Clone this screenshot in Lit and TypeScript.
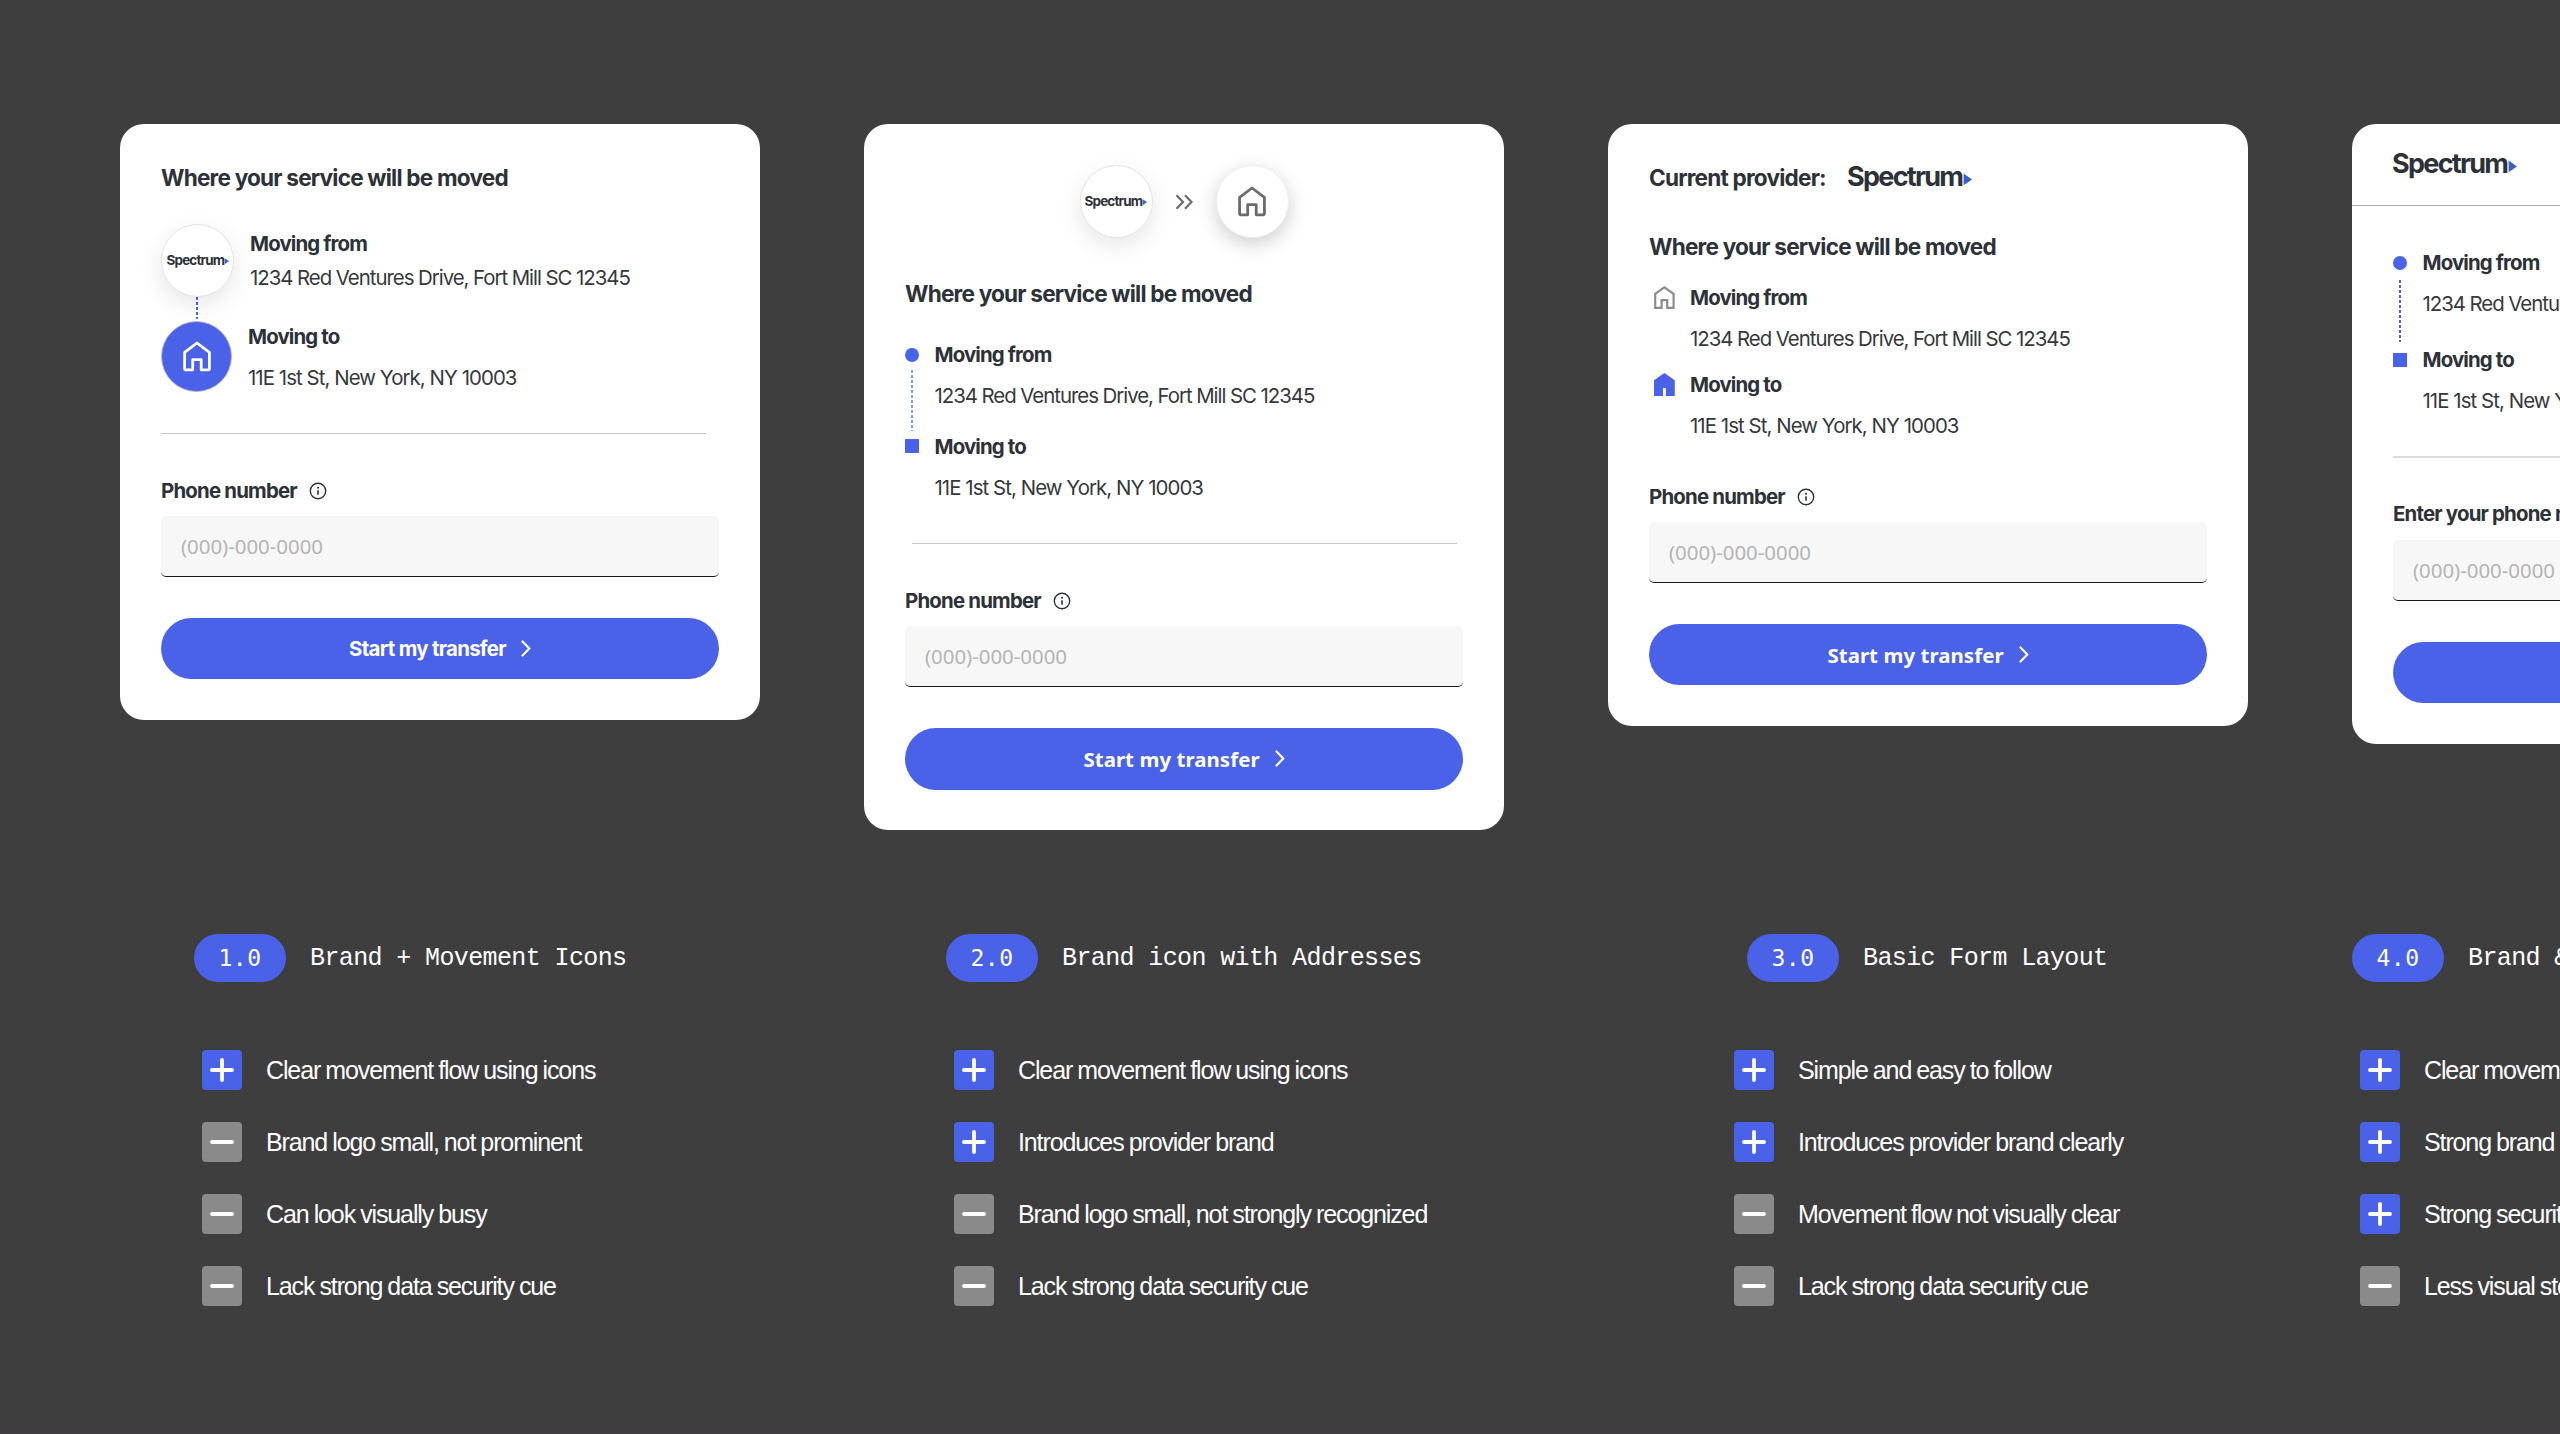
import { LitElement, html, css, svg } from 'lit';
import { customElement, property } from 'lit/decorators.js';
import { classMap } from 'lit/directives/class-map.js';

interface Note {
  good: boolean;
  text: string;
}

interface Variant {
  id: string;
  title: string;
  notes: Note[];
}

const FROM = '1234 Red Ventures Drive, Fort Mill SC 12345';
const TO = '11E 1st St, New York, NY 10003';

const variants: Variant[] = [
  {
    id: '1.0',
    title: 'Brand + Movement Icons',
    notes: [
      { good: true, text: 'Clear movement flow using icons' },
      { good: false, text: 'Brand logo small, not prominent' },
      { good: false, text: 'Can look visually busy' },
      { good: false, text: 'Lack strong data security cue' },
    ],
  },
  {
    id: '2.0',
    title: 'Brand icon with Addresses',
    notes: [
      { good: true, text: 'Clear movement flow using icons' },
      { good: true, text: 'Introduces provider brand' },
      { good: false, text: 'Brand logo small, not strongly recognized' },
      { good: false, text: 'Lack strong data security cue' },
    ],
  },
  {
    id: '3.0',
    title: 'Basic Form Layout',
    notes: [
      { good: true, text: 'Simple and easy to follow' },
      { good: true, text: 'Introduces provider brand clearly' },
      { good: false, text: 'Movement flow not visually clear' },
      { good: false, text: 'Lack strong data security cue' },
    ],
  },
  {
    id: '4.0',
    title: 'Brand & Security',
    notes: [
      { good: true, text: 'Clear movement flow' },
      { good: true, text: 'Strong brand presence' },
      { good: true, text: 'Strong security cue' },
      { good: false, text: 'Less visual storytelling' },
    ],
  },
];

const houseRound = html`
  <svg width="28" height="31" viewBox="0 0 28 31" fill="none">
    <path
      d="M2.9 28.8 H9.7 V18.6 H18.2 V28.8 H25.1 Q26.4 28.8 26.4 27.5 V11.4 L14 2 L1.6 11.4 V27.5 Q1.6 28.8 2.9 28.8 Z"
      stroke="currentColor"
      stroke-width="2.8"
      stroke-linejoin="round"
    />
  </svg>
`;

const houseOutline = html`
  <svg width="21" height="23" viewBox="0 0 21 23" fill="none">
    <path
      d="M1.2 21.8 H7.6 V14.2 H13.2 V21.8 H19.6 V7.8 L10.4 1.4 L1.2 7.8 Z"
      stroke="#8c8c8c"
      stroke-width="2.2"
    />
  </svg>
`;

const houseSolid = html`
  <svg width="21" height="23" viewBox="0 0 21 23">
    <path
      d="M0 23 V7.2 L10.4 0 L20.8 7.2 V23 H11.8 V15 H9 V23 Z"
      fill="#4a62e8"
    />
  </svg>
`;

@customElement('brand-logo')
export class BrandLogo extends LitElement {
  @property({ type: Number }) width = 124;

  static styles = css`
    :host {
      display: block;
    }
    svg {
      display: block;
      overflow: visible;
    }
    text {
      font-family: Inter, 'Liberation Sans', sans-serif;
      font-weight: 650;
      font-size: 27px;
      fill: #2d3138;
    }
  `;

  render() {
    return html`
      <svg width="${this.width}" height="${this.width / 4}" viewBox="0 0 124 31">
        ${svg`
          <text x="-1" y="23" textLength="117" lengthAdjust="spacing">Spectrum</text>
          <path d="M115.6 10.6 L124 16.4 L115.6 22.2 Z" fill="#3d5fc4" />
        `}
      </svg>
    `;
  }
}

@customElement('phone-form')
export class PhoneForm extends LitElement {
  @property({ type: String }) label = 'Phone number';

  @property({ type: Boolean }) alt = false;

  static styles = css`
    :host {
      display: block;
    }
    .label {
      display: flex;
      align-items: center;
      gap: 12.5px;
      height: 24px;
      margin-bottom: 13.4px;
      font-weight: 650;
      letter-spacing: -0.8px;
    }
    .field {
      display: flex;
      align-items: center;
      box-sizing: border-box;
      height: 61px;
      padding: 0 20px;
      border-radius: 5px;
      border-bottom: 1px solid #15181c;
      background: #f7f7f7;
      color: #b4b4b4;
      font-family: 'Noto Sans', sans-serif;
      font-size: 20.4px;
    }
    .button {
      display: flex;
      align-items: center;
      justify-content: center;
      gap: 15px;
      height: 61.4px;
      margin-top: 41px;
      border-radius: 31px;
      background: #4a62e8;
      color: white;
      font-weight: 650;
      letter-spacing: -0.7px;
    }
    .alt {
      font-family: 'Noto Sans', sans-serif;
      font-weight: 700;
      letter-spacing: 0.08px;
    }
  `;

  render() {
    return html`
      <div class="label">
        <span>${this.label}</span>
        <svg width="18" height="18" viewBox="0 0 18 18" fill="none">
          <circle cx="9" cy="9" r="7.7" stroke="#2d3138" stroke-width="1.4" />
          <path d="M9 8.2 V12.8" stroke="#2d3138" stroke-width="1.6" />
          <circle cx="9" cy="5.7" r="1" fill="#2d3138" />
        </svg>
      </div>
      <div class="field">(000)-000-0000</div>
      <div class=${classMap({ button: true, alt: this.alt })}>
        <span>Start my transfer</span>
        <svg width="10" height="17" viewBox="0 0 10 17" fill="none">
          <path
            d="M1.5 1.5 L8.3 8.5 L1.5 15.5"
            stroke="white"
            stroke-width="2.2"
            stroke-linecap="round"
            stroke-linejoin="round"
          />
        </svg>
      </div>
    `;
  }
}

@customElement('variant-notes')
export class VariantNotes extends LitElement {
  @property({ attribute: false }) variant!: Variant;

  static styles = css`
    :host {
      display: block;
      color: white;
      white-space: nowrap;
    }
    .header {
      display: flex;
      align-items: center;
      gap: 24px;
      height: 48px;
      padding-left: var(--head-inset, 0);
    }
    .title {
      padding-top: 2px;
      font-family: 'Liberation Mono', monospace;
      font-size: 25px;
      letter-spacing: -0.62px;
    }
    .badge {
      display: flex;
      align-items: center;
      justify-content: center;
      width: 92px;
      height: 48px;
      border-radius: 24px;
      background: #4a62e8;
      font-family: 'DejaVu Sans Mono', monospace;
      font-size: 23px;
      letter-spacing: 0.5px;
    }
    ul {
      display: flex;
      flex-direction: column;
      gap: 32px;
      margin: 68px 0 0;
      padding: 0 0 0 var(--list-inset, 0);
      list-style: none;
    }
    li {
      display: flex;
      align-items: center;
      gap: 24px;
      height: 40px;
      font-family: 'Liberation Sans', sans-serif;
      font-size: 25px;
      letter-spacing: -1.12px;
      word-spacing: -0.7px;
    }
    .mark {
      display: flex;
      align-items: center;
      justify-content: center;
      width: 40px;
      height: 40px;
      border-radius: 4px;
      background: #8a8a8a;
    }
    .good {
      background: #4a62e8;
    }
  `;

  render() {
    return html`
      <div class="header">
        <span class="badge">${this.variant.id}</span>
        <span class="title">${this.variant.title}</span>
      </div>
      <ul>
        ${this.variant.notes.map(
          note => html`
            <li>
              <span class=${classMap({ mark: true, good: note.good })}>
                <svg width="24" height="24" viewBox="0 0 24 24">
                  <path
                    d=${note.good ? 'M2 12 H22 M12 2 V22' : 'M2 12 H22'}
                    stroke="white"
                    stroke-width="3.8"
                    stroke-linecap="round"
                  />
                </svg>
              </span>
              <span>${note.text}</span>
            </li>
          `
        )}
      </ul>
    `;
  }
}

@customElement('app-root')
export class AppRoot extends LitElement {
  static styles = css`
    :host {
      display: block;
      box-sizing: border-box;
      width: 2560px;
      height: 1434px;
      overflow: hidden;
      padding: 124px 0 0 120px;
      border-bottom: 1px solid #443c40;
      background: #3e3e3e;
      font-family: Inter, 'Liberation Sans', sans-serif;
      font-size: 20.4px;
      line-height: 24px;
      color: #2d3138;
    }
    .board {
      display: grid;
      grid-template-columns: repeat(4, 640px);
      grid-template-rows: 810px auto;
      column-gap: 104px;
      align-items: start;
    }
    .card {
      box-sizing: border-box;
      padding: 40px 41px 40.6px;
      border-radius: 24px;
      background: white;
      white-space: nowrap;
    }
    h2 {
      margin: 0;
      height: 28px;
      font-size: 22.6px;
      font-weight: 650;
      line-height: 28px;
      letter-spacing: -0.8px;
    }
    .name {
      font-weight: 650;
      letter-spacing: -0.85px;
    }
    .address {
      color: #35383c;
      letter-spacing: -1px;
      word-spacing: -0.2px;
    }
    .name:nth-of-type(n + 3) + .address,
    .step.to .address {
      letter-spacing: -0.93px;
      word-spacing: 0;
    }
    .rule {
      width: 545px;
      height: 1.4px;
      margin-bottom: 44.6px;
      background: #c6c6c6;
    }
    .circle {
      display: flex;
      align-items: center;
      justify-content: center;
      box-sizing: border-box;
      flex: none;
      width: 73px;
      height: 73px;
      border: 1px solid #e4e4e4;
      border-radius: 50%;
      background: white;
      box-shadow: 0 8px 24px rgba(0, 0, 0, 0.1);
    }
    .raised {
      border-color: #f0f0f0;
      color: #6b6b6b;
      box-shadow: 0 6px 20px rgba(0, 0, 0, 0.2);
    }
    .filled {
      width: 71px;
      height: 71px;
      border-color: #b9b9c8;
      background: #4a62e8;
      color: white;
      box-shadow: none;
    }
    .stem {
      width: 1.5px;
      background: repeating-linear-gradient(
        #4a62e8 0 3px,
        transparent 3px 5px
      );
    }

    /* 1.0 */
    .step {
      display: flex;
      gap: 16px;
    }
    .step.from {
      margin-top: 32px;
    }
    .step.from .text {
      padding-top: 8.3px;
    }
    .step.from .address {
      margin-top: 9.3px;
    }
    .step.to .text {
      padding-top: 4.4px;
    }
    .step.to .address {
      margin-top: 17px;
    }
    .step-stem {
      height: 21.7px;
      margin: 0 0 2px 35px;
    }
    .one .rule {
      margin-top: 41px;
    }

    /* 2.0 */
    .movement {
      display: flex;
      align-items: center;
      justify-content: center;
      gap: 22.5px;
      height: 73px;
      margin: 1px 0 42px;
    }
    .track {
      display: grid;
      grid-template-columns: 14px auto;
      column-gap: 15.5px;
      margin-top: 34.8px;
    }
    .line {
      display: flex;
      flex-direction: column;
      align-items: center;
      gap: 8px;
      padding-top: 5px;
    }
    .line .stem {
      height: 61.7px;
    }
    .two .line .stem {
      opacity: 0.65;
    }
    .dot,
    .square {
      width: 14px;
      height: 14px;
      background: #4a62e8;
    }
    .dot {
      border-radius: 50%;
    }
    .places .address {
      margin-top: 17px;
    }
    .places .name + .address + .name {
      margin-top: 26.8px;
    }
    .two .rule {
      margin: 43.5px 0 44.4px 6.5px;
    }

    /* 3.0 */
    .provider {
      display: flex;
      gap: 22px;
      height: 28px;
      margin-bottom: 41px;
    }
    .provider brand-logo {
      margin-top: -1px;
    }
    .homes {
      display: grid;
      grid-template-columns: 36px auto;
      padding: 24.5px 0 46.6px 5px;
    }
    .homes .name {
      grid-column: 2;
    }
    .homes .address {
      grid-column: 2;
      margin: 17.2px 0 22.2px;
    }
    .homes .address.last {
      margin-bottom: 0;
    }
    .homes svg {
      grid-column: 1;
      margin-top: 0.5px;
    }

    /* 4.0 */
    .four {
      padding-top: 0;
    }
    .brand-bar {
      box-sizing: border-box;
      height: 82px;
      margin: 0 -41px;
      padding: 25.5px 41px 0;
      border-bottom: 1.4px solid #a9a9a9;
    }
    .four .track {
      margin-top: 44.6px;
    }
    .four .line {
      gap: 10.5px;
    }
    .four .stem {
      height: 62px;
    }
    .four .places .name + .address + .name {
      margin-top: 32px;
    }
    .four .rule {
      width: 558px;
      margin-top: 43.6px;
      background: #dcdcdc;
    }

    .notes-1 {
      --head-inset: 74px;
      --list-inset: 82px;
    }
    .notes-2 {
      --head-inset: 82px;
      --list-inset: 90px;
    }
    .notes-3 {
      --head-inset: 139px;
      --list-inset: 126px;
    }
    .notes-4 {
      --list-inset: 8px;
    }
  `;

  track() {
    return html`
      <div class="track">
        <div class="line">
          <div class="dot"></div>
          <div class="stem"></div>
          <div class="square"></div>
        </div>
        <div class="places">
          <div class="name">Moving from</div>
          <div class="address">${FROM}</div>
          <div class="name">Moving to</div>
          <div class="address">${TO}</div>
        </div>
      </div>
    `;
  }

  render() {
    return html`
      <div class="board">
        <section class="card one">
          <h2>Where your service will be moved</h2>
          <div class="step from">
            <div class="circle"><brand-logo .width=${62}></brand-logo></div>
            <div class="text">
              <div class="name">Moving from</div>
              <div class="address">${FROM}</div>
            </div>
          </div>
          <div class="stem step-stem"></div>
          <div class="step to">
            <div class="circle filled">${houseRound}</div>
            <div class="text">
              <div class="name">Moving to</div>
              <div class="address">${TO}</div>
            </div>
          </div>
          <div class="rule"></div>
          <phone-form></phone-form>
        </section>

        <section class="card two">
          <div class="movement">
            <div class="circle"><brand-logo .width=${62}></brand-logo></div>
            <svg width="18" height="16" viewBox="0 0 18 16" fill="none">
              <path
                d="M1.5 1.2 L8 8 L1.5 14.8 M10 1.2 L16.5 8 L10 14.8"
                stroke="#6b6b6b"
                stroke-width="2.2"
              />
            </svg>
            <div class="circle raised">${houseRound}</div>
          </div>
          <h2>Where your service will be moved</h2>
          ${this.track()}
          <div class="rule"></div>
          <phone-form alt></phone-form>
        </section>

        <section class="card three">
          <div class="provider">
            <h2>Current provider:</h2>
            <brand-logo></brand-logo>
          </div>
          <h2>Where your service will be moved</h2>
          <div class="homes">
            ${houseOutline}
            <div class="name">Moving from</div>
            <div class="address">${FROM}</div>
            ${houseSolid}
            <div class="name">Moving to</div>
            <div class="address last">${TO}</div>
          </div>
          <phone-form alt></phone-form>
        </section>

        <section class="card four">
          <div class="brand-bar"><brand-logo></brand-logo></div>
          ${this.track()}
          <div class="rule"></div>
          <phone-form alt label="Enter your phone number"></phone-form>
        </section>

        ${variants.map(
          (variant, i) => html`
            <variant-notes
              class="notes-${i + 1}"
              .variant=${variant}
            ></variant-notes>
          `
        )}
      </div>
    `;
  }
}
